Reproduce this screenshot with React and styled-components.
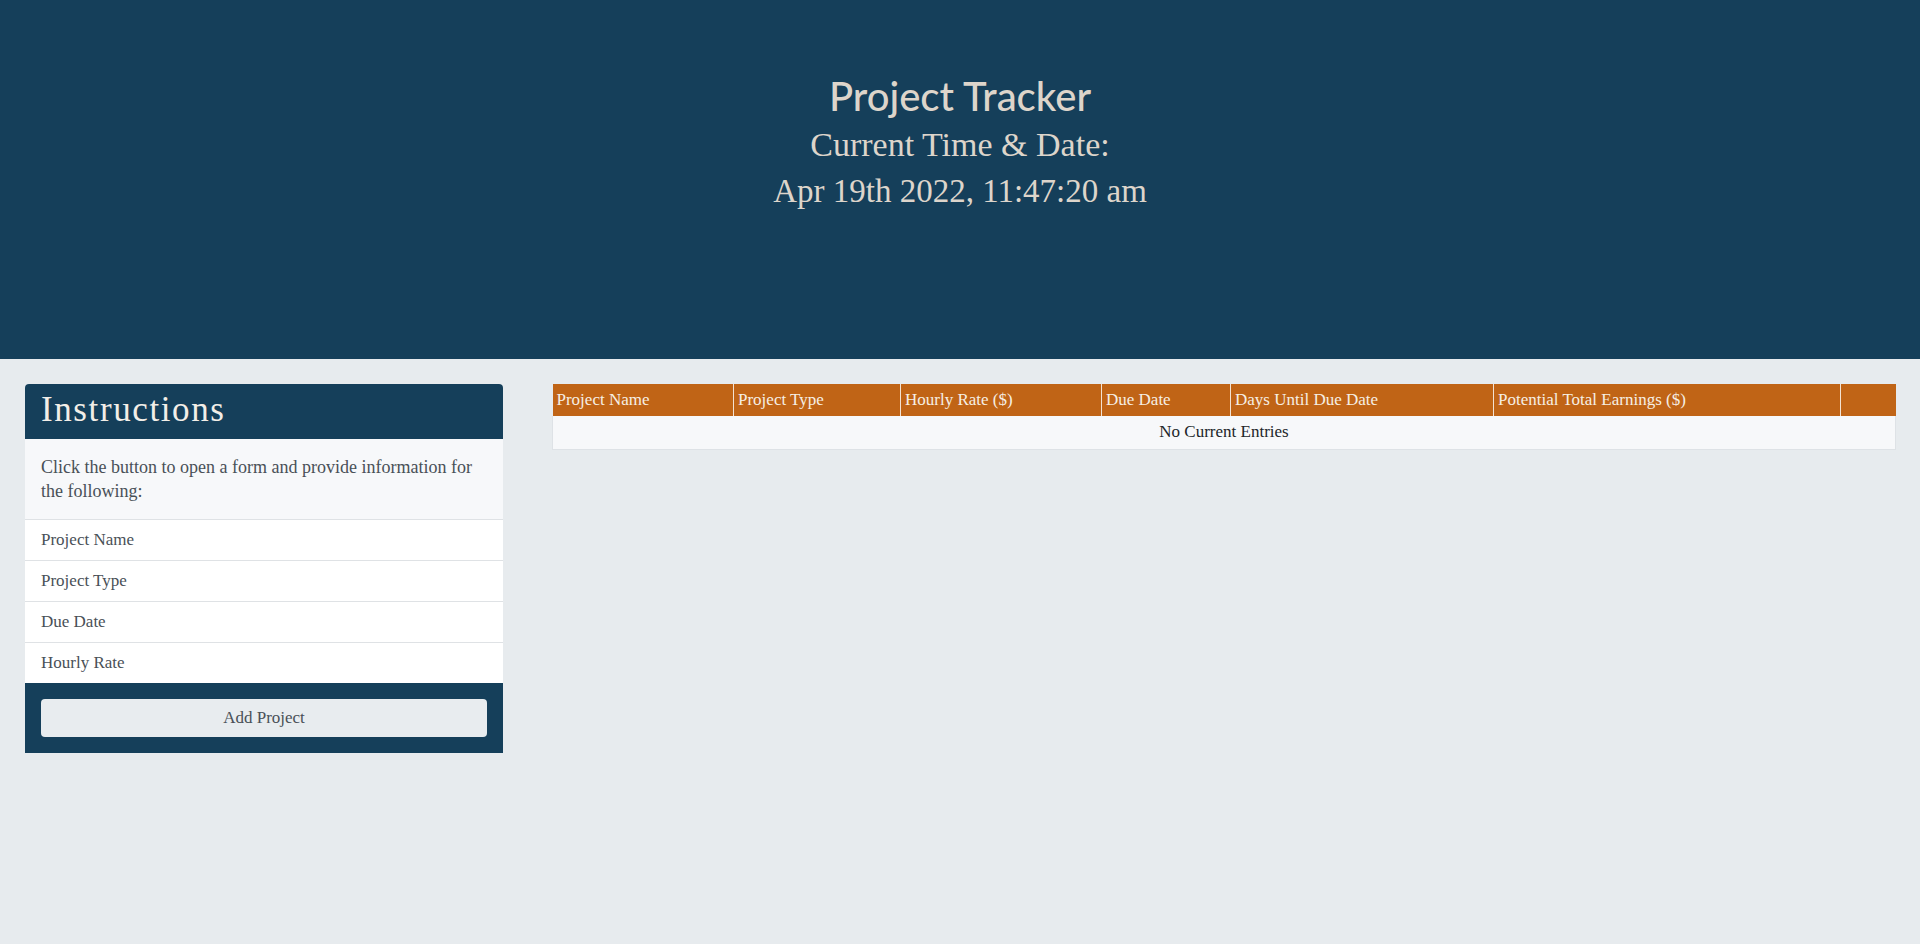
import React from 'react'
import styled, { createGlobalStyle } from 'styled-components'

const GlobalStyle = createGlobalStyle`
  html, body {
    margin: 0;
    padding: 0;
    background-color: #e7ebee;
    font-family: 'Liberation Serif', 'Times New Roman', serif;
    color: #212529;
  }
`

const columns = [
  { label: 'Project Name', width: 181 },
  { label: 'Project Type', width: 167 },
  { label: 'Hourly Rate ($)', width: 201 },
  { label: 'Due Date', width: 129 },
  { label: 'Days Until Due Date', width: 263 },
  { label: 'Potential Total Earnings ($)', width: 347 },
  { label: '', width: 55 }
]

const fields = ['Project Name', 'Project Type', 'Due Date', 'Hourly Rate']

const App = () => (
  <Page>
    <GlobalStyle />
    <Header>
      <Title>Project Tracker</Title>
      <SubTitle>Current Time &amp; Date:</SubTitle>
      <DateLine>Apr 19th 2022, 11:47:20 am</DateLine>
    </Header>
    <Main>
      <Card>
        <CardHeader>Instructions</CardHeader>
        <CardText>
          Click the button to open a form and provide information for the
          following:
        </CardText>
        <FieldList>
          {fields.map(field => (
            <FieldItem key={field}>{field}</FieldItem>
          ))}
        </FieldList>
        <CardFooter>
          <AddButton type="button">Add Project</AddButton>
        </CardFooter>
      </Card>
      <TableWrap>
        <Table>
          <colgroup>
            {columns.map((col, i) => (
              <col key={i} style={{ width: col.width }} />
            ))}
          </colgroup>
          <thead>
            <tr>
              {columns.map((col, i) => (
                <HeadCell key={i}>{col.label}</HeadCell>
              ))}
            </tr>
          </thead>
          <tbody>
            <tr>
              <EmptyCell colSpan={columns.length}>No Current Entries</EmptyCell>
            </tr>
          </tbody>
        </Table>
      </TableWrap>
    </Main>
  </Page>
)

const Page = styled.div`
  min-height: 944px;
  background-color: #e7ebee;
`

const Header = styled.header`
  height: 359px;
  box-sizing: border-box;
  padding-top: 71px;
  background-color: #153f5a;
  color: #ddd5cb;
  text-align: center;
`

const Title = styled.h1`
  margin: 0;
  font-family: Lato, 'Open Sans', sans-serif;
  font-size: 40px;
  font-weight: 500;
  line-height: 50px;
`

const SubTitle = styled.div`
  font-size: 34px;
  line-height: 47px;
`

const DateLine = styled.div`
  font-size: 33px;
  line-height: 47px;
`

const Main = styled.main`
  display: flex;
  align-items: flex-start;
  gap: 49px;
  padding: 25px;
`

const Card = styled.section`
  width: 478px;
  flex-shrink: 0;
  border-radius: 4px 4px 0 0;
  overflow: hidden;
  background-color: #fff;
`

const CardHeader = styled.h2`
  margin: 0;
  padding: 4px 16px 7px;
  background-color: #153f5a;
  color: #f2eee8;
  font-size: 35px;
  font-weight: 400;
  letter-spacing: 1.6px;
  line-height: 44px;
`

const CardText = styled.p`
  margin: 0;
  padding: 16px;
  background-color: #f7f8fa;
  color: #495057;
  font-size: 18px;
  line-height: 24px;
  border-bottom: 1px solid #dfe2e5;
`

const FieldList = styled.ul`
  list-style: none;
  margin: 0;
  padding: 0;
`

const FieldItem = styled.li`
  padding: 8px 16px;
  color: #495057;
  font-size: 17px;
  line-height: 24px;
  border-bottom: 1px solid #dfe2e5;

  &:last-child {
    border-bottom: none;
  }
`

const CardFooter = styled.div`
  padding: 16px;
  background-color: #153f5a;
`

const AddButton = styled.button`
  display: block;
  width: 100%;
  height: 38px;
  border: none;
  border-radius: 4px;
  background-color: #e8ecef;
  color: #495057;
  font-family: 'Liberation Serif', 'Times New Roman', serif;
  font-size: 17px;
  cursor: pointer;
`

const TableWrap = styled.div`
  flex: 1;
`

const Table = styled.table`
  width: 100%;
  border-collapse: collapse;
  table-layout: fixed;
  font-size: 17px;
`

const HeadCell = styled.th`
  height: 32px;
  box-sizing: border-box;
  padding: 4px 4px;
  background-color: #c06416;
  color: #f6efe4;
  font-weight: 400;
  text-align: left;
  line-height: 22px;
  border-left: 1px solid #f3e2d2;

  &:first-child {
    border-left: none;
  }
`

const EmptyCell = styled.td`
  height: 33px;
  box-sizing: border-box;
  padding: 4px;
  background-color: #f7f8fa;
  border: 1px solid #dee2e6;
  border-top: none;
  text-align: center;
  line-height: 22px;
`

export default App
